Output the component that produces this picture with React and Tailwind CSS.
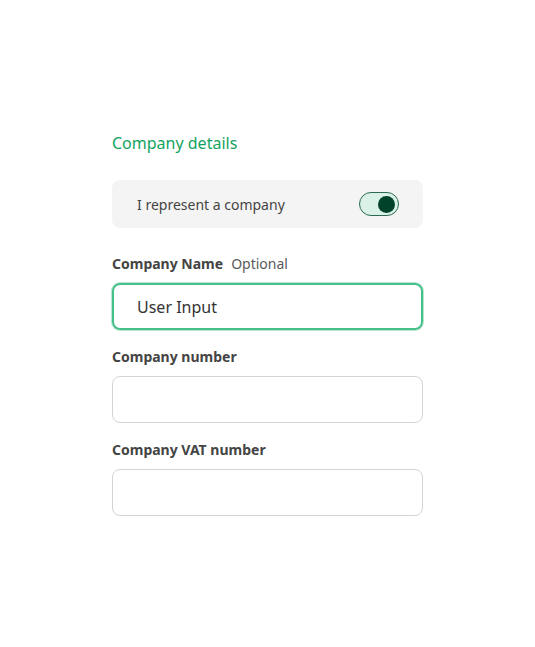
import { useState } from 'react';

function Field({ label, optional, value, focused }) {
  return (
    <div className="flex flex-col">
      <label className="flex items-center gap-2 h-5 text-[14px] leading-5 text-[#444]">
        <span className="font-bold">{label}</span>
        {optional && <span className="text-[#5a5a5a]">Optional</span>}
      </label>
      <div
        className={
          focused
            ? 'mt-[9px] h-[47px] rounded-lg border-2 border-[#45c08b] shadow-[0_0_0_1px_#b9e6d1] flex items-center pl-[23px] text-[16px] text-[#333]'
            : 'mt-[9px] h-[47px] rounded-lg border border-[#d4d4d4] flex items-center pl-6 text-[16px] text-[#333]'
        }
      >
        {value}
      </div>
    </div>
  );
}

export default function App() {
  const [on, setOn] = useState(true);

  return (
    <div className="min-h-screen bg-white flex justify-center" style={{ fontFamily: '"Noto Sans", "Open Sans", sans-serif' }}>
      <div className="w-[311px] pt-[131px] flex flex-col">
        <h2 className="text-[16px] leading-6 text-[#12a35f]">Company details</h2>

        <div className="mt-[25px] h-12 rounded-lg bg-[#f4f4f4] flex items-center justify-between pl-[25px] pr-6">
          <span className="text-[14px] text-[#444]">I represent a company</span>
          <button
            type="button"
            onClick={() => setOn(!on)}
            className="w-10 h-6 rounded-full border border-[#2e6a50] bg-[#d9f1e7] flex items-center justify-end px-[3px]"
          >
            <span className="w-[17px] h-[17px] rounded-full bg-[#00432a]" />
          </button>
        </div>

        <div className="mt-[26px] flex flex-col gap-[17px]">
          <Field label="Company Name" optional value="User Input" focused />
          <Field label="Company number" />
          <Field label="Company VAT number" />
        </div>
      </div>
    </div>
  );
}
